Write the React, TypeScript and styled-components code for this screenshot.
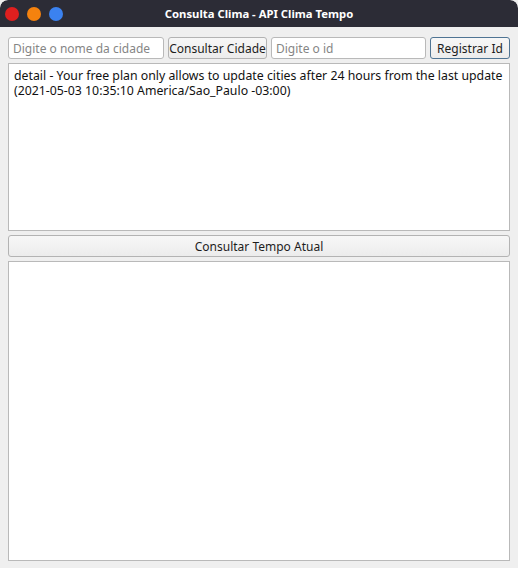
import React from "react";
import styled, { createGlobalStyle } from "styled-components";

const Global = createGlobalStyle`
  html, body { margin: 0; padding: 0; background: #efefef; }
  body { font-family: "Noto Sans", "DejaVu Sans", sans-serif; }
`;

const Window = styled.div`
  width: 518px;
  height: 568px;
  display: flex;
  flex-direction: column;
  background: #efefef;
  overflow: hidden;
  border-radius: 8px 8px 0 0;
`;

const TitleBar = styled.div`
  height: 27px;
  flex: none;
  background: #2c2c36;
  position: relative;
  display: flex;
  align-items: center;
  justify-content: center;
  color: #ffffff;
  font-weight: 700;
  font-size: 11.3px;
  border-radius: 8px 8px 0 0;
`;

const Dots = styled.div`
  position: absolute;
  left: 5px;
  top: 7px;
  display: flex;
  gap: 8px;
`;

const Dot = styled.span<{ $c: string }>`
  width: 14px;
  height: 14px;
  border-radius: 50%;
  background: ${(p) => p.$c};
`;

const Body = styled.div`
  flex: 1;
  display: flex;
  flex-direction: column;
  padding: 10px 8px 8px 8px;
  gap: 4px;
`;

const Row = styled.div`
  display: flex;
  gap: 4px;
  height: 22px;
`;

const Input = styled.input<{ $w: number }>`
  box-sizing: border-box;
  width: ${(p) => p.$w}px;
  height: 22px;
  border: 1px solid #b9b9b9;
  border-radius: 3px;
  background: #fff;
  font-family: inherit;
  font-size: 12px;
  padding: 0 4px;
  outline: none;
  &::placeholder { color: #858585; }
`;

const Button = styled.button<{ $w?: number; $def?: boolean }>`
  box-sizing: border-box;
  ${(p) => (p.$w ? `width: ${p.$w}px;` : "")}
  height: 22px;
  border: 1px solid ${(p) => (p.$def ? "#4f7493" : "#b3b3b3")};
  border-radius: 3px;
  background: linear-gradient(#f7f7f7, #ececec);
  font-family: inherit;
  font-size: 12px;
  color: #1d1d1d;
  padding: 0;
  white-space: nowrap;
`;

const Wide = styled(Button)`
  width: 100%;
  flex: none;
`;

const TextBox = styled.div<{ $h: number }>`
  box-sizing: border-box;
  flex: none;
  height: ${(p) => p.$h}px;
  background: #fff;
  border: 1px solid #b9b9b9;
  padding: 4px 5px;
  font-size: 12.3px;
  line-height: 15px;
  color: #111;
  white-space: nowrap;
`;

const Line = styled.div`
  height: 15px;
`;

export default function App() {
  return (
    <>
      <Global />
      <Window>
        <TitleBar>
          <Dots>
            <Dot $c="#df1f1f" />
            <Dot $c="#f5820e" />
            <Dot $c="#3b82f0" />
          </Dots>
          Consulta Clima - API Clima Tempo
        </TitleBar>
        <Body>
          <Row>
            <Input $w={156} placeholder="Digite o nome da cidade" />
            <Button $w={99}>Consultar Cidade</Button>
            <Input $w={155} placeholder="Digite o id" />
            <Button $w={80} $def>Registrar Id</Button>
          </Row>
          <TextBox $h={168}>
            <Line>detail - Your free plan only allows to update cities after 24 hours from the last update</Line>
            <Line>(2021-05-03 10:35:10 America/Sao_Paulo -03:00)</Line>
          </TextBox>
          <Wide>Consultar Tempo Atual</Wide>
          <TextBox $h={300} />
        </Body>
      </Window>
    </>
  );
}
